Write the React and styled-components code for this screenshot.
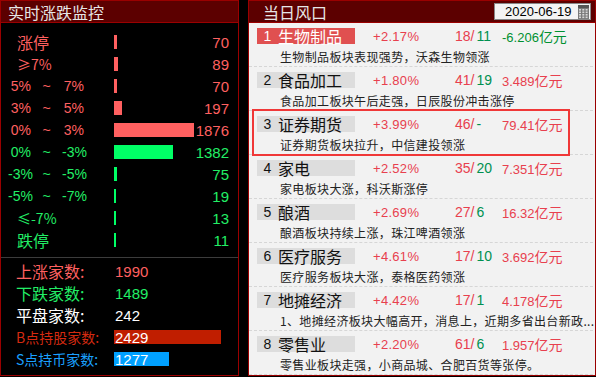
import React from "react";
import styled, { createGlobalStyle } from "styled-components";

const Global = createGlobalStyle`
  html, body { margin: 0; padding: 0; background: #000; }
  body { width: 596px; height: 377px; overflow: hidden; font-family: "Noto Sans CJK SC", "Liberation Sans", sans-serif; }
`;

const Page = styled.div`
  display: flex;
  gap: 9px;
  width: 596px;
  height: 376px;
  background: #000;
`;

const Panel = styled.div`
  box-sizing: border-box;
  width: ${(p) => p.$w}px;
  height: 376px;
  border: 1px solid #9a0000;
  display: flex;
  flex-direction: column;
  background: ${(p) => p.$bg};
  position: relative;
  overflow: hidden;
`;

const Header = styled.div`
  height: 21px;
  flex: none;
  background: #5c0000;
  border-bottom: 1px solid #9a0000;
  display: flex;
  align-items: center;
  justify-content: space-between;
  padding: 0 4px 0 ${(p) => p.$pl}px;
  color: #e6e6e6;
  font-size: 16px;
  line-height: 1;
`;

const LeftBody = styled.div`
  padding: 8px 9px 0 7px;
  display: flex;
  flex-direction: column;
`;

const Row = styled.div`
  height: 22px;
  display: flex;
  align-items: center;
  color: ${(p) => p.$c};
  font-size: 14px;
`;

const Label = styled.div`
  width: 106px;
  flex: none;
  display: flex;
  align-items: center;
  font-size: ${(p) => (p.$big ? 16 : 14)}px;
  padding-left: ${(p) => p.$pl || 0}px;
  box-sizing: border-box;
`;

const Range = styled.div`
  display: grid;
  grid-template-columns: 23px 31px 22px;
  font-family: "Liberation Sans", sans-serif;
  font-size: 14px;
  & > span:nth-child(1) { text-align: right; }
  & > span:nth-child(2) { text-align: center; }
  & > span:nth-child(3) { text-align: right; }
`;

const BarTrack = styled.div`
  flex: 1;
  display: flex;
  align-items: center;
`;

const Bar = styled.div`
  height: 14px;
  background: ${(p) => p.$c};
`;

const Num = styled.div`
  font-family: "Liberation Sans", sans-serif;
  font-size: 15px;
  text-align: right;
  min-width: 30px;
`;

const Sep = styled.div`
  height: 1px;
  background: #3c3c3c;
  margin: 6px 0 0 0;
`;

const StatBody = styled.div`
  padding: 2px 0 0 15px;
  display: flex;
  flex-direction: column;
`;

const StatRow = styled.div`
  height: 22px;
  display: flex;
  align-items: center;
`;

const StatLabel = styled.div`
  width: 98px;
  flex: none;
  color: ${(p) => p.$c};
  font-size: ${(p) => (p.$small ? 14 : 16)}px;
`;

const StatVal = styled.div`
  height: 14px;
  display: flex;
  align-items: center;
  background: ${(p) => p.$bg || "transparent"};
  color: ${(p) => p.$c || "#fff"};
  width: ${(p) => (p.$w ? p.$w + "px" : "auto")};
  font-family: "Liberation Sans", sans-serif;
  font-size: 15px;
  padding-left: 1px;
`;

const DateBox = styled.div`
  width: 97px;
  height: 17px;
  box-sizing: border-box;
  background: #f4f4f4;
  border: 1px solid #888;
  display: flex;
  align-items: center;
  justify-content: space-between;
  padding: 0 1px 0 10px;
  color: #000;
  font-family: "Liberation Sans", sans-serif;
  font-size: 13px;
`;

const List = styled.div`
  display: flex;
  flex-direction: column;
`;

const Item = styled.div`
  height: 44px;
  box-sizing: border-box;
  border-bottom: 1px dashed #d6d6d6;
  margin-right: 2px;
  position: relative;
  ${(p) =>
    p.$hl &&
    `&::after {
      content: "";
      position: absolute;
      left: 3px;
      top: -2px;
      width: 318px;
      height: 47px;
      box-sizing: border-box;
      border: 2px solid #f03838;
    }`}
`;

const TitleRow = styled.div`
  display: flex;
  align-items: center;
  padding: 5px 0 0 8px;
  height: 16px;
  box-sizing: content-box;
`;

const TitleBlock = styled.div`
  width: 98px;
  height: 16px;
  flex: none;
  display: flex;
  align-items: center;
  background: ${(p) => (p.$first ? "#e05050" : "#dddddd")};
  color: ${(p) => (p.$first ? "#fff" : "#111")};
  & > b {
    font-weight: normal;
    font-family: "Liberation Sans", sans-serif;
    font-size: 14px;
    width: 21px;
    text-align: center;
  }
  & > span { font-size: 16px; }
`;

const Pct = styled.div`
  width: 82px;
  margin-left: 18px;
  color: #e8404e;
  font-family: "Liberation Sans", sans-serif;
  font-size: 13px;
  letter-spacing: 0.3px;
`;

const Count = styled.div`
  width: 47px;
  font-family: "Liberation Sans", sans-serif;
  font-size: 14px;
  color: #e8404e;
  & > i { font-style: normal; color: #009050; margin-left: 2px; }
`;

const Amount = styled.div`
  color: ${(p) => (p.$neg ? "#009030" : "#e8404e")};
  font-size: 13px;
  font-family: "Liberation Sans", "Noto Sans CJK SC", sans-serif;
  & > em { font-style: normal; font-size: 14px; font-family: "Noto Sans CJK SC", sans-serif; }
`;

const Desc = styled.div`
  padding: 5px 0 0 31px;
  font-size: 12px;
  letter-spacing: 0.35px;
  color: #222;
  white-space: nowrap;
  line-height: 16px;
`;

const Calendar = () => (
  <svg width="11" height="14" viewBox="0 0 11 14">
    <rect x="0" y="0" width="11" height="14" fill="#7a7a7a" />
    <rect x="0" y="0" width="11" height="3" fill="#555" />
    {[0, 1, 2, 3].map((r) =>
      [0, 1, 2].map((c) => (
        <rect key={r + "-" + c} x={1 + c * 3.3} y={4 + r * 2.5} width="2" height="1.6" fill="#d8d8d8" />
      ))
    )}
  </svg>
);

const RED = "#ff6060";
const GREEN = "#22ee66";

const rows = [
  { kind: "big", text: "涨停", n: 70, c: RED, bar: RED },
  { kind: "sym", text: "≥7%", n: 89, c: RED, bar: RED },
  { kind: "range", a: "5%", b: "7%", n: 70, c: RED, bar: RED },
  { kind: "range", a: "3%", b: "5%", n: 197, c: RED, bar: RED },
  { kind: "range", a: "0%", b: "3%", n: 1876, c: RED, bar: RED },
  { kind: "range", a: "0%", b: "-3%", n: 1382, c: GREEN, bar: "#00ff66" },
  { kind: "range", a: "-3%", b: "-5%", n: 75, c: GREEN, bar: "#00ff66" },
  { kind: "range", a: "-5%", b: "-7%", n: 19, c: GREEN, bar: "#00ff66" },
  { kind: "sym", text: "≤-7%", n: 13, c: GREEN, bar: "#00ff66" },
  { kind: "big", text: "跌停", n: 11, c: GREEN, bar: "#00ff66" },
];

const items = [
  { name: "生物制品", pct: "+2.17%", up: "18", down: "11", amt: "-6.206", neg: true, desc: "生物制品板块表现强势，沃森生物领涨" },
  { name: "食品加工", pct: "+1.80%", up: "41", down: "19", amt: "3.489", desc: "食品加工板块午后走强，日辰股份冲击涨停" },
  { name: "证券期货", pct: "+3.99%", up: "46", down: "-", amt: "79.41", desc: "证券期货板块拉升，中信建投领涨", hl: true },
  { name: "家电", pct: "+2.52%", up: "35", down: "20", amt: "7.351", desc: "家电板块大涨，科沃斯涨停" },
  { name: "酿酒", pct: "+2.69%", up: "27", down: "6", amt: "16.32", desc: "酿酒板块持续上涨，珠江啤酒领涨" },
  { name: "医疗服务", pct: "+4.61%", up: "17", down: "10", amt: "3.692", desc: "医疗服务板块大涨，泰格医药领涨" },
  { name: "地摊经济", pct: "+4.42%", up: "17", down: "1", amt: "4.178", desc: "1、地摊经济板块大幅高开，消息上，近期多省出台新政..." },
  { name: "零售业", pct: "+2.20%", up: "61", down: "6", amt: "1.957", desc: "零售业板块走强，小商品城、合肥百货等张停。" },
];

const barWidth = (n) => Math.max(2, Math.round((n / 1876) * 80));

export default function App() {
  return (
    <Page>
      <Global />
      <Panel $w={239} $bg="#000">
        <Header $pl={7}>实时涨跌监控</Header>
        <LeftBody>
          {rows.map((r, i) => (
            <Row key={i} $c={r.c}>
              {r.kind === "big" && <Label $big $pl={9}>{r.text}</Label>}
              {r.kind === "sym" && <Label $pl={9}>{r.text}</Label>}
              {r.kind === "range" && (
                <Label>
                  <Range>
                    <span>{r.a}</span>
                    <span>~</span>
                    <span>{r.b}</span>
                  </Range>
                </Label>
              )}
              <BarTrack>
                <Bar $c={r.bar} style={{ width: barWidth(r.n) }} />
              </BarTrack>
              <Num>{r.n}</Num>
            </Row>
          ))}
        </LeftBody>
        <Sep />
        <StatBody>
          <StatRow>
            <StatLabel $c={RED}>上涨家数:</StatLabel>
            <StatVal $c={RED}>1990</StatVal>
          </StatRow>
          <StatRow>
            <StatLabel $c={GREEN}>下跌家数:</StatLabel>
            <StatVal $c={GREEN}>1489</StatVal>
          </StatRow>
          <StatRow>
            <StatLabel $c="#fff">平盘家数:</StatLabel>
            <StatVal>242</StatVal>
          </StatRow>
          <StatRow>
            <StatLabel $c="#d42a10" $small>B点持股家数:</StatLabel>
            <StatVal $bg="#c01e00" $w={106}>2429</StatVal>
          </StatRow>
          <StatRow>
            <StatLabel $c="#1aa0ff" $small>S点持币家数:</StatLabel>
            <StatVal $bg="#00a0ff" $w={54}>1277</StatVal>
          </StatRow>
        </StatBody>
      </Panel>
      <Panel $w={348} $bg="#f2f2f2">
        <Header $pl={14}>
          <span>当日风口</span>
          <DateBox>
            <span>2020-06-19</span>
            <Calendar />
          </DateBox>
        </Header>
        <List>
          {items.map((it, i) => (
            <Item key={i} $hl={it.hl}>
              <TitleRow>
                <TitleBlock $first={i === 0}>
                  <b>{i + 1}</b>
                  <span>{it.name}</span>
                </TitleBlock>
                <Pct>{it.pct}</Pct>
                <Count>
                  {it.up}/<i>{it.down}</i>
                </Count>
                <Amount $neg={it.neg}>
                  {it.amt}
                  <em>亿元</em>
                </Amount>
              </TitleRow>
              <Desc>{it.desc}</Desc>
            </Item>
          ))}
        </List>
      </Panel>
    </Page>
  );
}
